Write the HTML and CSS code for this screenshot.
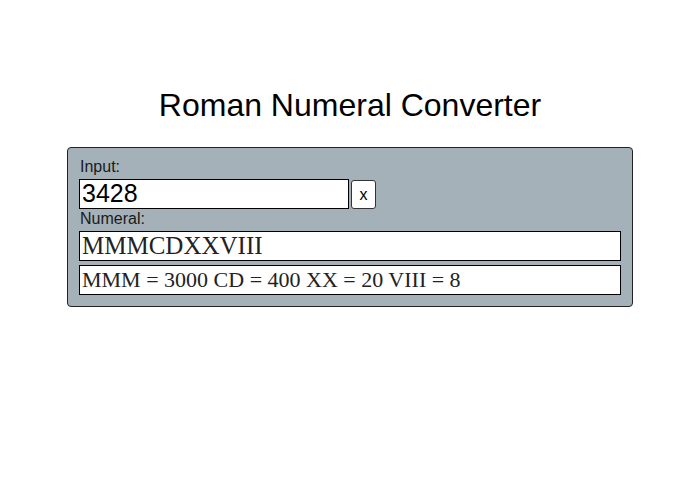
FILE: index.html
```html
<!DOCTYPE html>
<html>
<head>
<meta charset="utf-8">
<link rel="stylesheet" href="styles.css">
</head>
<body>
<h1 class="title">Roman Numeral Converter</h1>
<div class="panel">
  <label class="label">Input:</label>
  <div class="input-row">
    <div class="input">3428</div>
    <button class="clear">x</button>
  </div>
  <label class="label">Numeral:</label>
  <div class="out out-main">MMMCDXXVIII</div>
  <div class="out out-detail">MMM = 3000 CD = 400 XX = 20 VIII = 8</div>
</div>
</body>
</html>
```
FILE: styles.css
```css
html, body {
  margin: 0;
  padding: 0;
  background: #fff;
  font-family: "Liberation Sans", Arial, sans-serif;
}
body {
  padding-top: 85px;
}
.title {
  margin: 0;
  text-align: center;
  font-size: 32px;
  font-weight: normal;
  line-height: 40px;
  color: #000;
}
.panel {
  box-sizing: border-box;
  width: 566px;
  margin: 22px 0 0 67px;
  padding: 9px 11px 11px 11px;
  background: #a5b1b8;
  border: 1px solid #222;
  border-radius: 4px;
  display: flex;
  flex-direction: column;
}
.label {
  font-size: 16px;
  line-height: 20px;
  height: 20px;
  margin-bottom: 2px;
  color: #1a1a1a;
  margin-left: 1px;
}
.input-row {
  display: flex;
  align-items: flex-end;
  gap: 2px;
}
.input {
  box-sizing: border-box;
  width: 270px;
  height: 30px;
  border: 1px solid #000;
  background: #fff;
  font-size: 25px;
  line-height: 27px;
  padding-left: 2px;
  color: #000;
}
.clear {
  box-sizing: border-box;
  width: 25px;
  height: 29px;
  padding: 0;
  border: 1px solid #333;
  border-radius: 3px;
  background: #fff;
  font-family: "Liberation Sans", Arial, sans-serif;
  font-size: 16px;
  color: #000;
}
.out {
  box-sizing: border-box;
  height: 30px;
  border: 1px solid #000;
  background: #fff;
  font-family: "Liberation Serif", "Times New Roman", serif;
  color: #222;
  padding-left: 2px;
  line-height: 28px;
}
.out-main {
  font-size: 25px;
}
.out-detail {
  margin-top: 4px;
  font-size: 22px;
}
```
